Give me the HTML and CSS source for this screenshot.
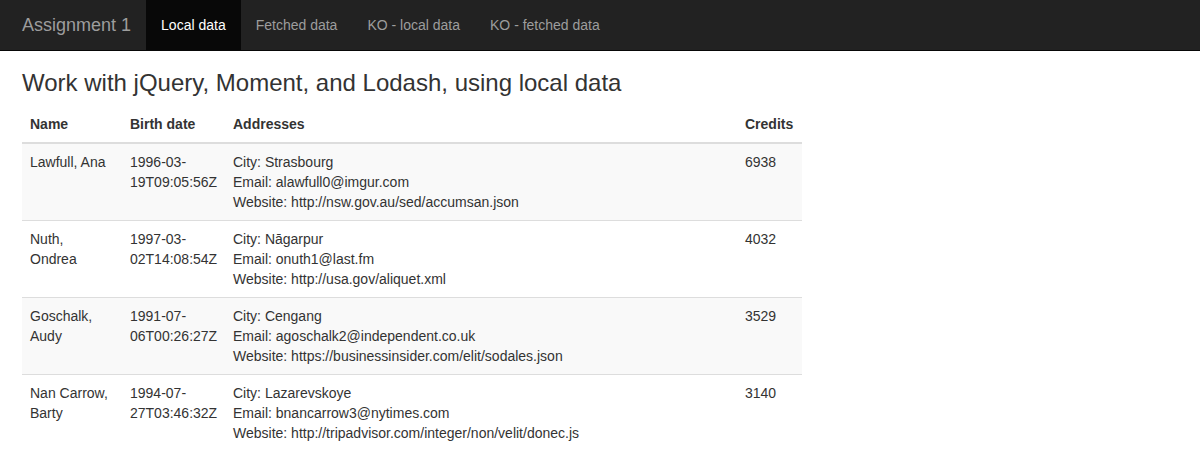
FILE: index.html
```html
<!DOCTYPE html>
<html>
<head>
<meta charset="utf-8">
<title>Assignment 1</title>
<link rel="stylesheet" href="styles.css">
</head>
<body>
<nav class="navbar">
  <a class="brand" href="#">Assignment 1</a>
  <ul class="nav">
    <li><a class="active" href="#">Local data</a></li>
    <li><a href="#">Fetched data</a></li>
    <li><a href="#">KO - local data</a></li>
    <li><a href="#">KO - fetched data</a></li>
  </ul>
</nav>
<main class="content">
  <h3 class="title">Work with jQuery, Moment, and Lodash, using local data</h3>
  <table class="data">
    <colgroup>
      <col class="c-name"><col class="c-date"><col class="c-addr"><col class="c-cred">
    </colgroup>
    <thead>
      <tr><th>Name</th><th>Birth date</th><th>Addresses</th><th>Credits</th></tr>
    </thead>
    <tbody>
      <tr>
        <td>Lawfull, Ana</td>
        <td>1996-03-<br>19T09:05:56Z</td>
        <td>City: Strasbourg<br>Email: alawfull0@imgur.com<br>Website: http://nsw.gov.au/sed/accumsan.json</td>
        <td>6938</td>
      </tr>
      <tr>
        <td>Nuth,<br>Ondrea</td>
        <td>1997-03-<br>02T14:08:54Z</td>
        <td>City: Nāgarpur<br>Email: onuth1@last.fm<br>Website: http://usa.gov/aliquet.xml</td>
        <td>4032</td>
      </tr>
      <tr>
        <td>Goschalk,<br>Audy</td>
        <td>1991-07-<br>06T00:26:27Z</td>
        <td>City: Cengang<br>Email: agoschalk2@independent.co.uk<br>Website: https://businessinsider.com/elit/sodales.json</td>
        <td>3529</td>
      </tr>
      <tr>
        <td>Nan Carrow,<br>Barty</td>
        <td>1994-07-<br>27T03:46:32Z</td>
        <td>City: Lazarevskoye<br>Email: bnancarrow3@nytimes.com<br>Website: http://tripadvisor.com/integer/non/velit/donec.js</td>
        <td>3140</td>
      </tr>
    </tbody>
  </table>
</main>
</body>
</html>
```
FILE: styles.css
```css
* { box-sizing: border-box; }
body {
  margin: 0;
  font-family: "Liberation Sans", Arial, Helvetica, sans-serif;
  font-size: 14px;
  line-height: 20px;
  color: #333;
  background: #fff;
}
.navbar {
  display: flex;
  height: 51px;
  background: #222;
  border-bottom: 1px solid #080808;
  padding-left: 7px;
}
.brand {
  padding: 15px;
  font-size: 18px;
  line-height: 20px;
  color: #9d9d9d;
  text-decoration: none;
}
.nav {
  display: flex;
  list-style: none;
  margin: 0;
  padding: 0;
}
.nav a {
  display: block;
  padding: 15px 15px;
  line-height: 20px;
  color: #9d9d9d;
  text-decoration: none;
}
.nav a.active {
  color: #fff;
  background: #080808;
}
.content {
  padding: 0 22px;
}
.title {
  margin: 19px 0 10px;
  font-size: 24px;
  font-weight: 500;
  line-height: 1.1;
}
.data {
  width: 780px;
  border-collapse: collapse;
  border-spacing: 0;
  table-layout: fixed;
}
.c-name { width: 100px; }
.c-date { width: 103px; }
.c-addr { width: 512px; }
.c-cred { width: 65px; }
.data th {
  text-align: left;
  font-weight: bold;
  padding: 8px;
  vertical-align: bottom;
  border-bottom: 2px solid #ddd;
}
.data td {
  padding: 8px;
  vertical-align: top;
  border-top: 1px solid #ddd;
}
.data tbody tr:nth-child(odd) {
  background: #f9f9f9;
}
```
